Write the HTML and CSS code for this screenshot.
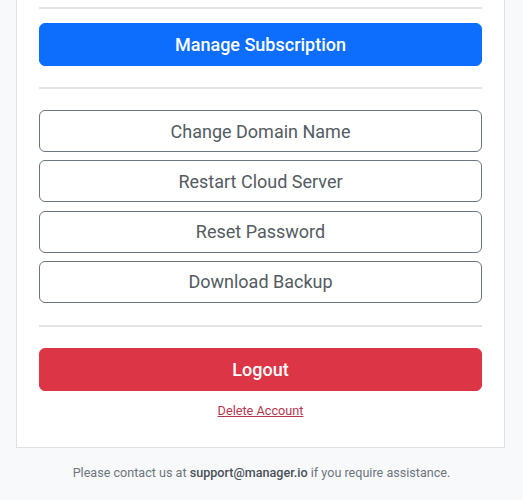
FILE: index.html
```html
<!DOCTYPE html>
<html>
<head>
<meta charset="utf-8">
<link rel="stylesheet" href="styles.css">
</head>
<body>
<div class="card">
  <hr class="rule rule-top">
  <button class="btn btn-primary">Manage Subscription</button>
  <hr class="rule">
  <div class="stack">
    <button class="btn btn-outline">Change Domain Name</button>
    <button class="btn btn-outline">Restart Cloud Server</button>
    <button class="btn btn-outline">Reset Password</button>
    <button class="btn btn-outline">Download Backup</button>
  </div>
  <hr class="rule">
  <button class="btn btn-danger">Logout</button>
  <div class="delete"><a href="#">Delete Account</a></div>
</div>
<p class="footer">Please contact us at <strong>support@manager.io</strong> if you require assistance.</p>
</body>
</html>
```

FILE: styles.css
```css
* { box-sizing: border-box; }
html, body { margin: 0; padding: 0; }
body {
  background: #f8f9fa;
  font-family: Roboto, "Liberation Sans", sans-serif;
  color: #212529;
}
.card {
  margin: 0 18px 0 16px;
  background: #fff;
  border: 1px solid #dee2e6;
  border-top: 0;
  padding: 7px 22px 29px 22px;
}
.rule {
  border: 0;
  border-top: 2px solid #e3e4e5;
  margin: 0 0 21px 0;
}
.rule-top {
  margin-bottom: 14px;
}
.btn {
  display: block;
  width: 100%;
  height: 43px;
  font-family: Roboto, "Liberation Sans", sans-serif;
  font-size: 18px;
  border-radius: 6px;
  cursor: pointer;
  padding: 0 16px;
  margin: 0 0 21px 0;
}
.btn-primary {
  background: #0d6efd;
  border: 1px solid #0d6efd;
  color: #fff;
  font-weight: 500;
}
.btn-danger {
  background: #dc3545;
  border: 1px solid #dc3545;
  color: #fff;
  font-weight: 500;
  margin-bottom: 12px;
}
.stack {
  display: flex;
  flex-direction: column;
  gap: 8.33px;
  margin-bottom: 22px;
}
.stack .btn {
  height: 42px;
  margin: 0;
  background: #fff;
  border: 1px solid #6c757d;
  color: #545b62;
}
.delete {
  text-align: center;
  font-size: 12.7px;
}
.delete a {
  color: #b2374f;
}
.footer {
  text-align: center;
  margin: 17px 0 0 0;
  font-size: 12.6px;
  color: #6c757d;
}
.footer strong {
  color: #495057;
  font-weight: 500;
}
```
